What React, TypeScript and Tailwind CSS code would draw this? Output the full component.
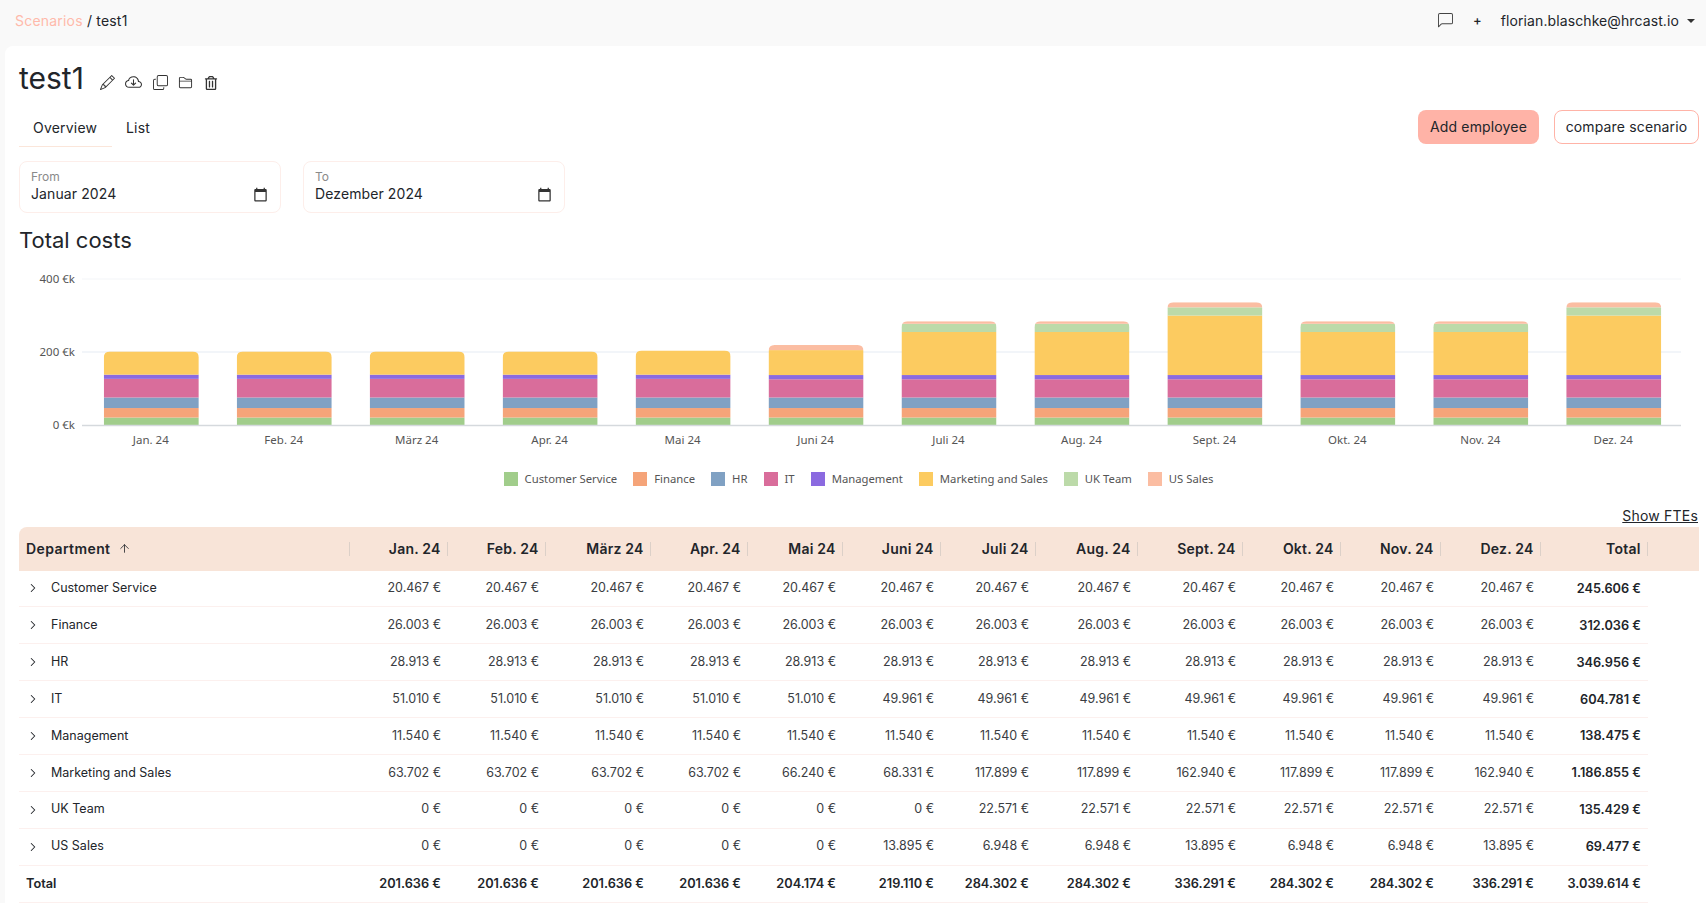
import { ArrowUp, ChevronRight } from "lucide-react"
import { BsChatLeft, BsCloudArrowDown, BsCopy, BsFolder2, BsPencil } from "react-icons/bs"
import { FaRegTrashAlt } from "react-icons/fa"
import { MdCalendarToday } from "react-icons/md"

const months = ["Jan. 24", "Feb. 24", "März 24", "Apr. 24", "Mai 24", "Juni 24", "Juli 24", "Aug. 24", "Sept. 24", "Okt. 24", "Nov. 24", "Dez. 24"]

const departments = [
  { name: "Customer Service", color: "#a1cd8b", values: Array(12).fill(20467), total: "245.606 €" },
  { name: "Finance", color: "#f5a479", values: Array(12).fill(26003), total: "312.036 €" },
  { name: "HR", color: "#80a1c3", values: Array(12).fill(28913), total: "346.956 €" },
  { name: "IT", color: "#d96d9b", values: [51010, 51010, 51010, 51010, 51010, 49961, 49961, 49961, 49961, 49961, 49961, 49961], total: "604.781 €" },
  { name: "Management", color: "#8b6ae0", values: Array(12).fill(11540), total: "138.475 €" },
  { name: "Marketing and Sales", color: "#fccb60", values: [63702, 63702, 63702, 63702, 66240, 68331, 117899, 117899, 162940, 117899, 117899, 162940], total: "1.186.855 €" },
  { name: "UK Team", color: "#bcdaa9", values: [0, 0, 0, 0, 0, 0, 22571, 22571, 22571, 22571, 22571, 22571], total: "135.429 €" },
  { name: "US Sales", color: "#fbbda2", values: [0, 0, 0, 0, 0, 13895, 6948, 6948, 13895, 6948, 6948, 13895], total: "69.477 €" },
]

const monthTotals = [201636, 201636, 201636, 201636, 204174, 219110, 284302, 284302, 336291, 284302, 284302, 336291]

const euro = (value: number) => `${value.toLocaleString("de-DE")} €`

const rowGrid = "grid grid-cols-[331px_98px_98px_105px_97px_95px_98px_95px_102px_105px_98px_100px_100px_107px] w-[1629px]"

const chartFont = "'Noto Sans', sans-serif"

const CostChart = () => {
  const left = 63
  const right = 1662
  const step = 132.95
  const baseY = 160
  const scale = 146 / 400000

  return (
    <svg width="1680" height="232" className="block">
      <line x1={left} x2={right} y1="14" y2="14" stroke="#f3f5f8" />
      <line x1={left} x2={right} y1="87" y2="87" stroke="#eef2f7" strokeWidth="1.5" />
      {["400 €k", "200 €k", "0 €k"].map((label, i) => (
        <text key={label} x="56" y={[14, 87, 160][i] + 4} textAnchor="end" fontSize="11.5" fill="#555" fontFamily={chartFont}>
          {label}
        </text>
      ))}
      {months.map((month, m) => {
        const x = left + step * m + 21.8
        let y = baseY
        const total = departments.reduce((sum, d) => sum + d.values[m], 0)
        const top = baseY - total * scale
        return (
          <g key={month}>
            <clipPath id={`bar-${m}`}>
              <path d={`M${x} ${baseY}V${top + 6}Q${x} ${top} ${x + 6} ${top}H${x + 89}Q${x + 95} ${top} ${x + 95} ${top + 6}V${baseY}Z`} />
            </clipPath>
            <g clipPath={`url(#bar-${m})`}>
              {departments.map((d) => {
                const h = d.values[m] * scale
                y -= h
                return <rect key={d.name} x={x} y={y} width="95" height={h} fill={d.color} />
              })}
            </g>
            <text x={x + 47} y="179" textAnchor="middle" fontSize="11.5" fill="#555" fontFamily={chartFont}>
              {month}
            </text>
          </g>
        )
      })}
      <line x1={left} x2={right} y1="160.5" y2="160.5" stroke="#d5d9dd" strokeWidth="1.5" />
    </svg>
  )
}

const Legend = () => (
  <div className="flex justify-center items-center gap-[16px] h-[18px] ml-[-1px] text-[11.3px] text-[#555] font-['Noto_Sans',sans-serif]">
    {departments.map((d) => (
      <div key={d.name} className="flex items-center gap-[7px]">
        <span className="w-[14px] h-[14px]" style={{ backgroundColor: d.color }} />
        <span>{d.name}</span>
      </div>
    ))}
  </div>
)

const DateField = ({ label, value }: { label: string; value: string }) => (
  <div className="w-[262px] h-[52px] rounded-lg border border-[#fdeeea] pl-[11px] pr-[12px] pt-[7px]">
    <div className="text-[12px] leading-[15px] text-[#8a8a8a]">{label}</div>
    <div className="flex items-center justify-between text-[14px] leading-[20px] tracking-[0.1px]">
      <span>{value}</span>
      <MdCalendarToday size={15} className="text-[#333]" />
    </div>
  </div>
)

const HeaderCell = ({ label }: { label: string }) => (
  <div className="flex items-center justify-end">
    <span className="text-[14px] font-semibold tracking-[0.2px]">{label}</span>
    <span className="ml-[6px] w-[1.5px] h-[14px] bg-[#dcd0c8]" />
  </div>
)

const App = () => {
  return (
    <div className="h-[903px] overflow-hidden bg-[#f9f9f9] text-[#22252a] font-['Inter',sans-serif]">
      <div className="h-[46px] flex items-center justify-between pb-[5px] pl-[15px] pr-[11px] text-[14px]">
        <div className="tracking-[0.2px]">
          <span className="text-[#ffb9ab]">Scenarios</span> / test1
        </div>
        <div className="flex items-center">
          <BsChatLeft size={15} className="text-[#444]" />
          <span className="ml-[20px] text-[13px] font-medium">+</span>
          <span className="ml-[19px] tracking-[0.1px]">florian.blaschke@hrcast.io</span>
          <span className="ml-[8px] border-x-[4.5px] border-t-[4.5px] border-x-transparent border-t-[#333]" />
        </div>
      </div>

      <div className="ml-[5px] h-[857px] bg-white rounded-tl-lg pl-[14px] pr-[7px]">
        <div className="flex items-end h-[52px] gap-[16px]">
          <h1 className="text-[30px] leading-[40px] font-normal">test1</h1>
          <div className="flex items-center gap-[10.5px] pb-[7px] text-[#333]">
            <BsPencil size={15} />
            <BsCloudArrowDown size={17} />
            <BsCopy size={15} />
            <BsFolder2 size={15} />
            <FaRegTrashAlt size={14} />
          </div>
        </div>

        <div className="flex justify-between items-start h-[51px] mt-[12px]">
          <div className="flex text-[14px] tracking-[0.2px]">
            <div className="w-[93px] h-[37px] pl-[14px] pt-[7px] border-b border-[#fbe6da]">Overview</div>
            <div className="pl-[14px] pt-[7px]">List</div>
          </div>
          <div className="flex gap-[15px] text-[14px] tracking-[0.15px]">
            <button className="h-[34px] w-[121px] pb-[1px] rounded-lg bg-[#ffb3a7]">Add employee</button>
            <button className="h-[34px] w-[145px] pb-[1px] rounded-lg border border-[#ffb3a7] bg-white">compare scenario</button>
          </div>
        </div>

        <div className="flex gap-[22px]">
          <DateField label="From" value="Januar 2024" />
          <DateField label="To" value="Dezember 2024" />
        </div>

        <h2 className="mt-[12px] text-[22px] leading-[30px] font-normal">Total costs</h2>

        <div className="mt-[10px]">
          <CostChart />
        </div>
        <div className="mt-[-27px]">
          <Legend />
        </div>

        <div className="flex justify-end mt-[18px] mb-[3px] h-[18px] items-center pr-[1px] text-[14px] tracking-[0.2px] underline">Show FTEs</div>

        <div className="h-[43.5px] bg-[#f8e4d8] rounded-tl-lg flex items-center">
          <div className={rowGrid}>
            <div className="flex items-center justify-between pl-[7px]">
              <span className="text-[14px] font-semibold tracking-[0.4px] flex items-center gap-[8px]">
                Department <ArrowUp size={13} strokeWidth={1.5} />
              </span>
              <span className="w-[1.5px] h-[14px] bg-[#dcd0c8]" />
            </div>
            {months.map((m) => (
              <HeaderCell key={m} label={m} />
            ))}
            <HeaderCell label="Total" />
          </div>
        </div>

        {departments.map((d) => (
          <div key={d.name} className={`${rowGrid} h-[36.9px] items-center border-b border-[#fcf0ee] text-[12.5px]`}>
            <div className="flex items-center pl-[7px]">
              <ChevronRight size={14} strokeWidth={1.75} />
              <span className="ml-[11px]">{d.name}</span>
            </div>
            {d.values.map((v, i) => (
              <div key={i} className="text-right pr-[7px] text-[#3a3d42]">
                {euro(v)}
              </div>
            ))}
            <div className="text-right pr-[7px] text-[12.75px] font-semibold">{d.total}</div>
          </div>
        ))}

        <div className={`${rowGrid} h-[36.9px] items-center border-b border-[#fcf0ee] text-[12.75px] font-semibold`}>
          <div className="pl-[7px]">Total</div>
          {monthTotals.map((v, i) => (
            <div key={i} className="text-right pr-[7px]">
              {euro(v)}
            </div>
          ))}
          <div className="text-right pr-[7px]">3.039.614 €</div>
        </div>
      </div>
    </div>
  )
}

export default App
